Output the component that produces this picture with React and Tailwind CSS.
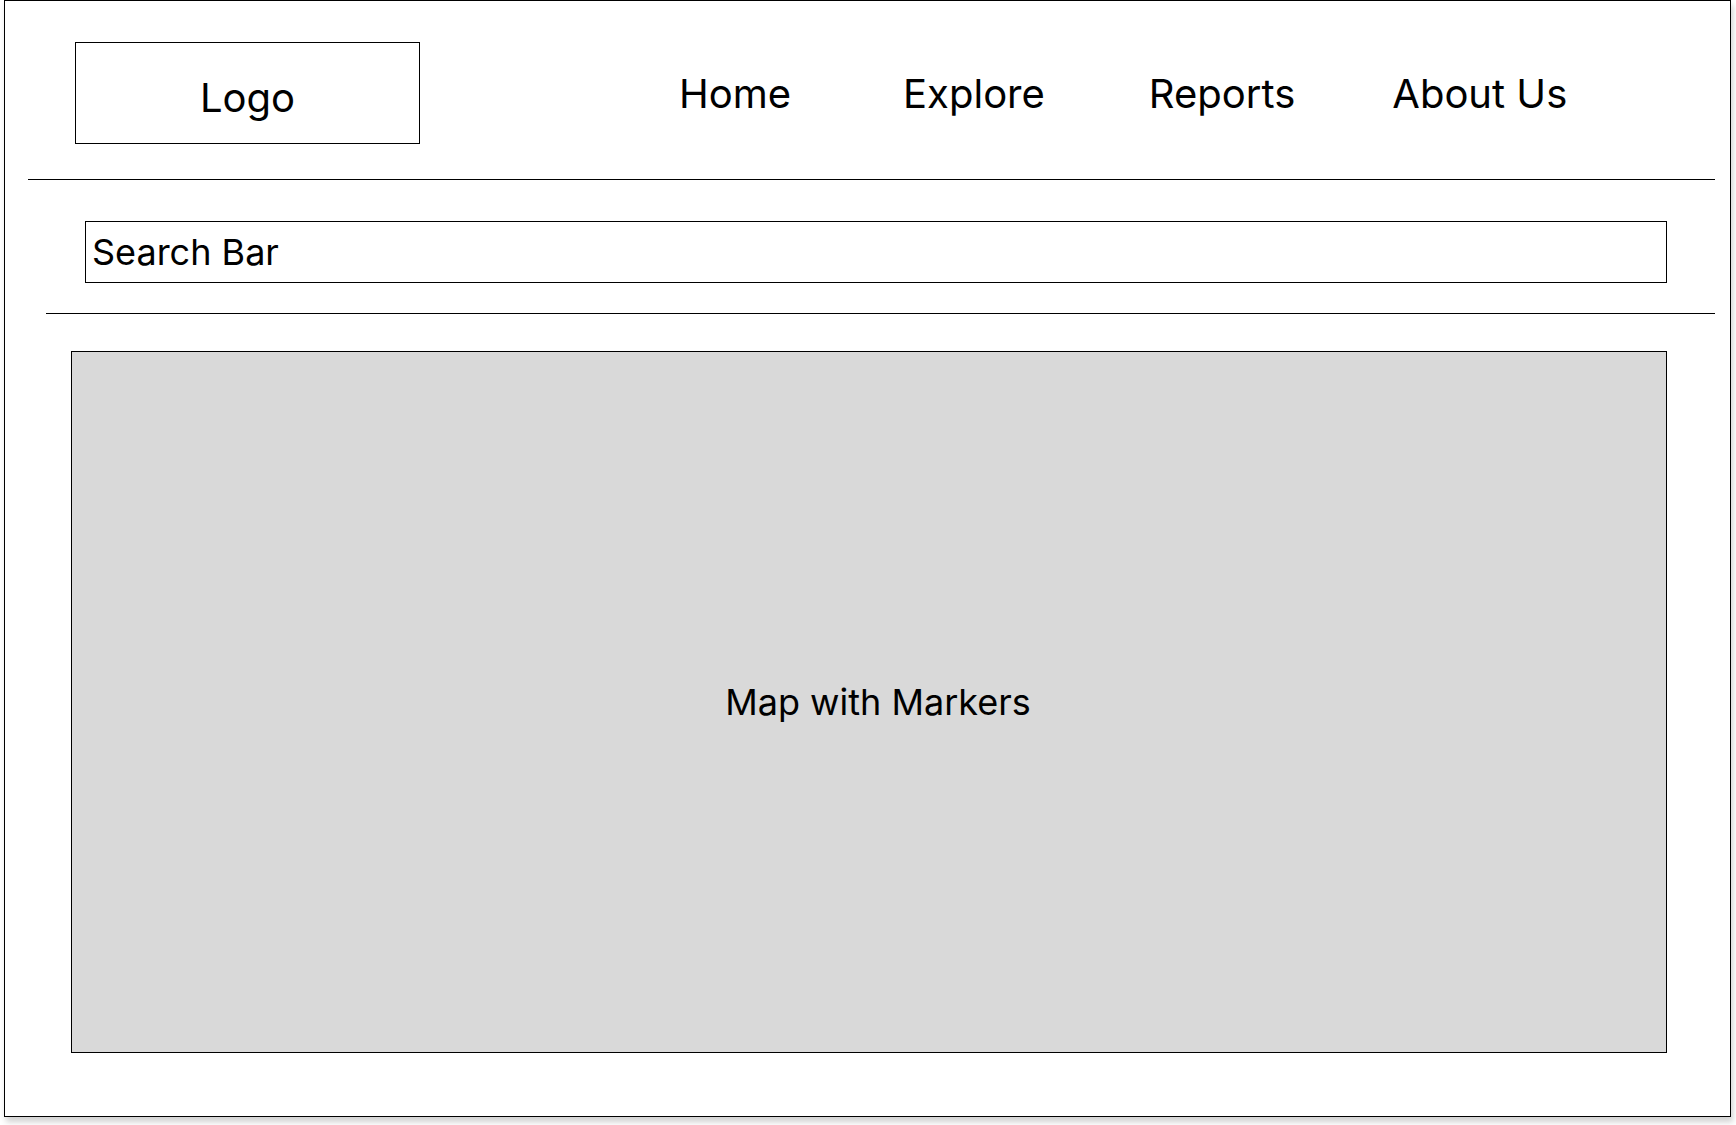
const NAV = [
  { label: 'Home', gap: 'ml-[259px]' },
  { label: 'Explore', gap: 'ml-[112px]' },
  { label: 'Reports', gap: 'ml-[104px]' },
  { label: 'About Us', gap: 'ml-[97px]' },
]

function Header() {
  return (
    <header className="flex items-start">
      {/* logo placeholder */}
      <div className="ml-[70px] mt-[41px] flex h-[102px] w-[345px] items-center justify-center border border-black pt-[9px]">
        <span className="text-[40px] leading-[40px] text-black">Logo</span>
      </div>
      <nav className="mt-[73px] flex">
        {NAV.map((n) => (
          <a key={n.label} href="#" className={`${n.gap} text-[40px] leading-[40px] text-black`}>
            {n.label}
          </a>
        ))}
      </nav>
    </header>
  )
}

export default function App() {
  return (
    <div className="h-[1125px] w-[1736px] bg-white font-['Inter',sans-serif]">
      <div className="ml-[4px] flex h-[1117px] w-[1727px] flex-col border border-black bg-white shadow-[2px_5px_6px_rgba(0,0,0,0.18)]">
        <Header />

        <hr className="ml-[23px] mt-[35px] w-[1687px] border-0 border-t border-black" />

        {/* search */}
        <div className="ml-[80px] mt-[41px] flex h-[62px] w-[1582px] items-start border border-black pl-[6px] pt-[12px]">
          <span className="text-[36px] leading-[36px] text-black">Search Bar</span>
        </div>

        <hr className="ml-[41px] mt-[30px] w-[1669px] border-0 border-t border-black" />

        {/* map */}
        <div className="ml-[66px] mt-[37px] flex h-[702px] w-[1596px] items-center justify-center border border-black bg-[#d9d9d9] pl-[18px]">
          <span className="text-[36px] leading-[36px] text-black">Map with Markers</span>
        </div>
      </div>
    </div>
  )
}
